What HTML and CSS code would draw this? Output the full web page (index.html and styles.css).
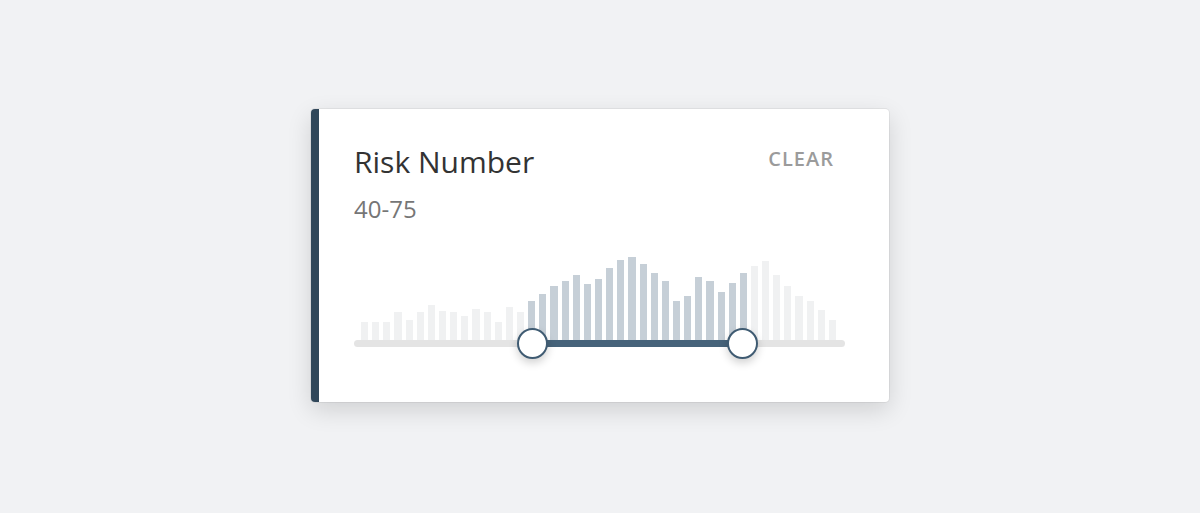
FILE: index.html
```html
<!DOCTYPE html>
<html lang="en">
<head>
<meta charset="utf-8">
<title>Risk Number</title>
<link rel="stylesheet" href="styles.css">
</head>
<body>
<div class="card">
  <div class="header">
    <h2 class="title">Risk Number</h2>
    <button class="clear">CLEAR</button>
  </div>
  <div class="range">40-75</div>
  <div class="chart">
    <div class="bars">
      <span class="bar" style="height:18px"></span>
      <span class="bar" style="height:18px"></span>
      <span class="bar" style="height:18px"></span>
      <span class="bar" style="height:28px"></span>
      <span class="bar" style="height:20px"></span>
      <span class="bar" style="height:28px"></span>
      <span class="bar" style="height:35px"></span>
      <span class="bar" style="height:29px"></span>
      <span class="bar" style="height:28px"></span>
      <span class="bar" style="height:24px"></span>
      <span class="bar" style="height:31px"></span>
      <span class="bar" style="height:28px"></span>
      <span class="bar" style="height:18px"></span>
      <span class="bar" style="height:33px"></span>
      <span class="bar" style="height:28px"></span>
      <span class="bar on" style="height:39px"></span>
      <span class="bar on" style="height:46px"></span>
      <span class="bar on" style="height:54px"></span>
      <span class="bar on" style="height:59px"></span>
      <span class="bar on" style="height:65px"></span>
      <span class="bar on" style="height:56px"></span>
      <span class="bar on" style="height:61px"></span>
      <span class="bar on" style="height:72px"></span>
      <span class="bar on" style="height:80px"></span>
      <span class="bar on" style="height:83px"></span>
      <span class="bar on" style="height:76px"></span>
      <span class="bar on" style="height:67px"></span>
      <span class="bar on" style="height:59px"></span>
      <span class="bar on" style="height:39px"></span>
      <span class="bar on" style="height:44px"></span>
      <span class="bar on" style="height:63px"></span>
      <span class="bar on" style="height:59px"></span>
      <span class="bar on" style="height:48px"></span>
      <span class="bar on" style="height:57px"></span>
      <span class="bar on" style="height:67px"></span>
      <span class="bar" style="height:74px"></span>
      <span class="bar" style="height:79px"></span>
      <span class="bar" style="height:65px"></span>
      <span class="bar" style="height:54px"></span>
      <span class="bar" style="height:44px"></span>
      <span class="bar" style="height:39px"></span>
      <span class="bar" style="height:30px"></span>
      <span class="bar" style="height:20px"></span>
    </div>
    <div class="track">
      <div class="fill" style="left:178px;width:210px"></div>
      <div class="handle" style="left:178px"></div>
      <div class="handle" style="left:388px"></div>
    </div>
  </div>
</div>
</body>
</html>
```
FILE: styles.css
```css
* { box-sizing: border-box; }
html, body { height: 100%; }
body {
  margin: 0;
  padding-bottom: 2px;
  background: #f1f2f4;
  display: flex;
  align-items: center;
  justify-content: center;
  font-family: "Open Sans", "Noto Sans", sans-serif;
}
.card {
  width: 578px;
  height: 293px;
  background: #fff;
  border-left: 8px solid #30475a;
  border-radius: 4px;
  padding: 35px 44px 0 35px;
  box-shadow: 0 0 0 1px rgba(0,0,0,0.05), 0 8px 24px rgba(0,0,0,0.14);
  display: flex;
  flex-direction: column;
}
.header {
  display: flex;
  justify-content: space-between;
  align-items: flex-start;
}
.title {
  margin: 0;
  font-size: 30px;
  line-height: 36px;
  font-weight: 400;
  color: #333;
}
.clear {
  border: 0;
  background: none;
  padding: 0;
  margin: 3px 11px 0 0;
  font-family: inherit;
  font-size: 20px;
  line-height: 24px;
  font-weight: 600;
  letter-spacing: 1px;
  color: #9b9b9b;
  cursor: pointer;
}
.range {
  margin-top: 14px;
  font-size: 24px;
  line-height: 30px;
  color: #767676;
}
.chart {
  margin-top: 26px;
}
.bars {
  height: 90px;
  display: flex;
  align-items: flex-end;
  gap: 4px;
  margin: 0 9px 0 7px;
}
.bar {
  flex: 1;
  background: #f0f1f2;
}
.bar.on {
  background: #c6cfd7;
}
.track {
  position: relative;
  height: 7px;
  border-radius: 4px;
  background: #e4e4e4;
}
.fill {
  position: absolute;
  top: 0;
  height: 7px;
  background: #46637a;
}
.handle {
  position: absolute;
  top: 50%;
  width: 31px;
  height: 31px;
  margin: -15.5px 0 0 -15.5px;
  border-radius: 50%;
  background: #fff;
  border: 2px solid #3f5b72;
  box-shadow: 0 4px 8px rgba(0,0,0,0.18);
}
```
